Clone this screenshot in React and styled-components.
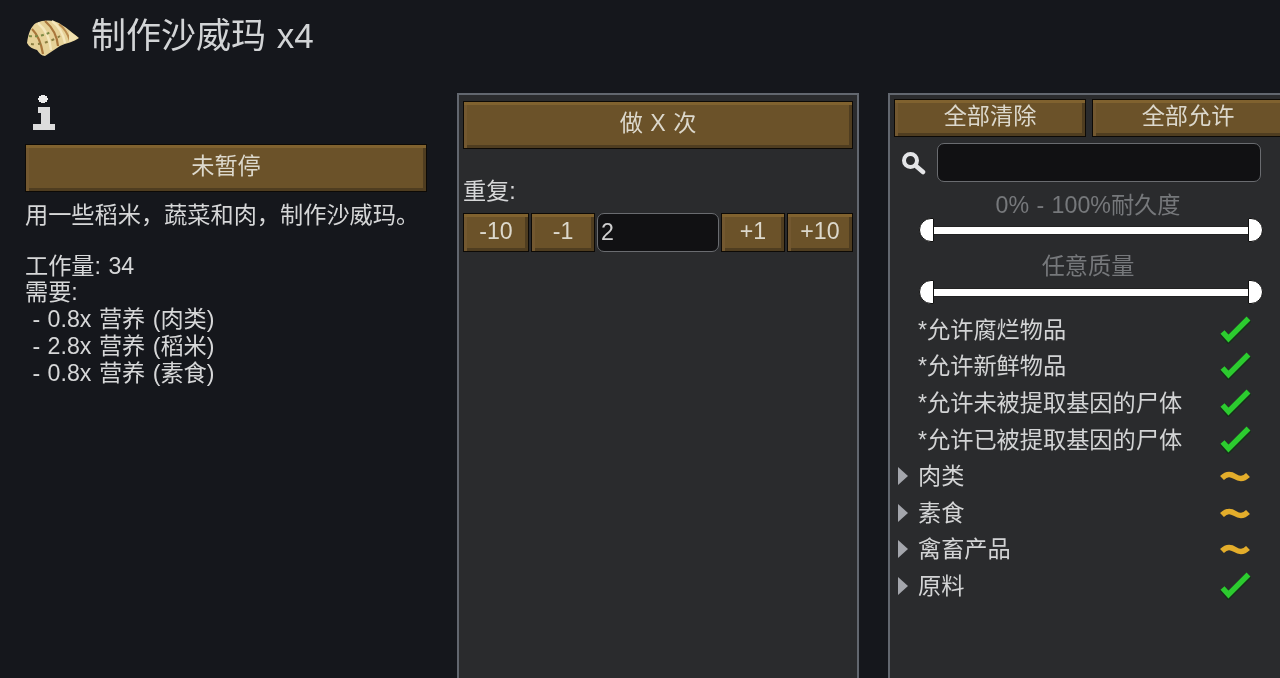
import React from 'react'
import styled, { createGlobalStyle } from 'styled-components'

const FONT = `"Liberation Sans", "Noto Sans CJK SC", sans-serif`

const Global = createGlobalStyle`
  html, body { margin: 0; padding: 0; background: #15171c; }
`

const Page = styled.div`
  width: 1280px;
  height: 678px;
  overflow: hidden;
  background: #15171c;
  color: #d6d7d8;
  font-family: ${FONT};
  font-size: 23.2px;
  word-spacing: 1px;
  display: flex;
  flex-direction: column;
  filter: blur(0.4px);
`
const Header = styled.header`
  height: 93px;
  flex: none;
  box-sizing: border-box;
  padding: 13px 0 0 26px;
  display: flex;
  align-items: flex-start;
  gap: 11px;
`
const Title = styled.h1`
  margin: 0;
  font-size: 35px;
  font-weight: 400;
  line-height: 46px;
  color: #d2d4d6;
  white-space: nowrap;
`
const Columns = styled.div`
  display: flex;
  align-items: flex-start;
  padding-left: 25px;
`
const Left = styled.section`
  width: 402px;
  flex: none;
  margin-right: 30px;
`
const InfoWrap = styled.div`
  height: 51px;
  padding-left: 8px;
`
const Description = styled.p`
  margin: ${p => p.$top}px 0 0;
  line-height: 26.7px;
  white-space: pre;
`
const Panel = styled.section`
  flex: none;
  width: 402px;
  height: 620px;
  margin-right: ${p => p.$gap || 0}px;
  box-sizing: border-box;
  background: #2a2b2d;
  border: 2px solid #62676f;
  padding: ${p => p.$top}px 4px 4px;
`
const Button = styled.button`
  display: block;
  width: ${p => (p.$width ? `${p.$width}px` : '100%')};
  height: ${p => p.$height}px;
  flex: none;
  box-sizing: border-box;
  margin: 0;
  padding: 0 0 2px;
  border: 1.5px solid #0d0a06;
  background: #6b5229;
  box-shadow: inset 0 3px 0 #80622f, inset 3px 0 0 #735830, inset 0 -3px 0 #4f3d20, inset -3px 0 0 #4f3d20;
  color: #dcd8cc;
  font-family: ${FONT};
  font-size: 23.2px;
  word-spacing: 1px;
  line-height: 1;
  white-space: nowrap;
  overflow: hidden;
`
const RepeatLabel = styled.div`
  margin-top: 29px;
  height: 35px;
  line-height: 27px;
`
const Stepper = styled.div`
  display: flex;
  gap: 2px;
`
const TextBox = styled.div`
  box-sizing: border-box;
  width: ${p => p.$width}px;
  height: ${p => p.$height}px;
  flex: none;
  background: #111113;
  border: 1.5px solid #6a6c70;
  border-radius: 7px;
  padding-left: 3px;
  line-height: 37px;
  color: #cfcfcf;
`
const ButtonRow = styled.div`
  display: flex;
  gap: 6px;
`
const SearchRow = styled.div`
  display: flex;
  align-items: center;
  margin-top: 6px;
  padding-left: 7px;
  gap: 11px;
`
const DimLabel = styled.div`
  text-align: center;
  color: #76787b;
  line-height: 26px;
  height: 26px;
  width: 388px;
  margin-top: ${p => p.$top}px;
`
const SliderTrack = styled.div`
  display: flex;
  align-items: center;
  height: 24px;
  width: 344px;
  margin: ${p => p.$top}px 0 0 24.5px;
`
const Bar = styled.div`
  flex: 1;
  height: 7px;
  background: #fff;
  box-shadow: 0 0 0 1px #222;
`
const Handle = styled.div`
  width: 15px;
  height: 24px;
  flex: none;
  box-sizing: border-box;
  background: #fff;
  border: 1px solid #111;
  position: relative;
  z-index: 1;
  border-radius: ${p => (p.$right ? '0 12px 12px 0' : '12px 0 0 12px')};
`
const List = styled.div`
  margin-top: 5.5px;
`
const Row = styled.div`
  display: flex;
  align-items: center;
  height: 36.6px;
  width: 333px;
  padding-left: 24px;
  position: relative;
  color: #d3d4d5;
`
const RowLabel = styled.span`
  flex: 1;
  white-space: nowrap;
`
const Arrow = styled.span`
  position: absolute;
  left: 4px;
  top: 50%;
  margin-top: -7px;
  width: 0;
  height: 0;
  border-left: 10px solid #a4a6ac;
  border-top: 9px solid transparent;
  border-bottom: 9px solid transparent;
`

const Sandwich = () => (
  <svg width="54" height="40" viewBox="0 0 54 40" style={{ flex: 'none', marginTop: 5 }}>
    <path d="M1 25 C2 16 5 8 10 5 C16 2 23 2 28 3 C34 5 39 9 43 12 C46 15 50 17 53 20 C48 24 40 25 34 28 C29 31 24 35 19 38 C16 38 13 35 11 32 C7 31 3 29 1 25Z" fill="#e6d298" />
    <path d="M6 11 C11 16 15 24 17 36" stroke="#a9773c" strokeWidth="2.2" fill="none" />
    <path d="M12 5 C19 11 24 20 25 32" stroke="#f4e7bd" strokeWidth="2.4" fill="none" />
    <path d="M19 3 C26 9 31 17 32 28" stroke="#a9773c" strokeWidth="2.2" fill="none" />
    <path d="M26 3 C33 8 37 15 39 25" stroke="#f4e7bd" strokeWidth="2.4" fill="none" />
    <path d="M33 6 C38 10 42 16 44 23" stroke="#b98b4e" strokeWidth="2" fill="none" />
    <path d="M3 18 C10 19 18 18 26 13" stroke="#7c8a45" strokeWidth="2" fill="none" strokeDasharray="3 3" />
    <path d="M5 26 C13 27 24 24 34 18" stroke="#8b7f42" strokeWidth="2" fill="none" strokeDasharray="3 4" />
    <path d="M43 13 C46 15 50 18 52 20 C49 22 46 23 43 24Z" fill="#f0e1b0" />
  </svg>
)

const InfoIcon = () => (
  <svg width="22" height="38" viewBox="0 0 22 38" shapeRendering="crispEdges">
    <path d="M8 2h4v1h2v2h1v2h-1v2h-2v1h-4v-1h-2v-2h-1v-2h1v-2h2z" fill="#ececec" />
    <path d="M5 14h12v17h5v6h-22v-6h8v-11h-3z" fill="#dcdcdc" />
  </svg>
)

const SearchIcon = () => (
  <svg width="25" height="24" viewBox="0 0 25 24" style={{ flex: 'none' }}>
    <circle cx="9.5" cy="9.5" r="6.5" fill="none" stroke="#e4e5e7" strokeWidth="4" />
    <path d="M15 15l7 6" stroke="#e4e5e7" strokeWidth="4.5" strokeLinecap="round" />
  </svg>
)

const Check = () => (
  <svg width="31" height="32" viewBox="0 0 31 32" style={{ flex: 'none' }}>
    <path d="M2.5 20.5L8.5 27.5L29 7" fill="none" stroke="#153018" strokeWidth="7" />
    <path d="M2.5 20L8.5 26.5L28.5 6.5" fill="none" stroke="#2ccb2f" strokeWidth="5.5" />
  </svg>
)

const Partial = () => (
  <svg width="31" height="32" viewBox="0 0 31 32" style={{ flex: 'none' }}>
    <path d="M2 20 C7 15 11 16 15 18.5 C19 21 23 22 28 17" fill="none" stroke="#e3ad2b" strokeWidth="5.5" />
  </svg>
)

const Slider = ({ top }) => (
  <SliderTrack $top={top}>
    <Handle />
    <Bar />
    <Handle $right />
  </SliderTrack>
)

const filters = [
  { label: '*允许腐烂物品', state: 'on' },
  { label: '*允许新鲜物品', state: 'on' },
  { label: '*允许未被提取基因的尸体', state: 'on' },
  { label: '*允许已被提取基因的尸体', state: 'on' },
  { label: '肉类', state: 'partial', tree: true },
  { label: '素食', state: 'partial', tree: true },
  { label: '禽畜产品', state: 'partial', tree: true },
  { label: '原料', state: 'on', tree: true },
]

const details = `工作量: 34
需要:
 - 0.8x 营养 (肉类)
 - 2.8x 营养 (稻米)
 - 0.8x 营养 (素食)`

export default function App() {
  return (
    <Page>
      <Global />
      <Header>
        <Sandwich />
        <Title>制作沙威玛 x4</Title>
      </Header>
      <Columns>
        <Left>
          <InfoWrap>
            <InfoIcon />
          </InfoWrap>
          <Button $height={48}>未暂停</Button>
          <Description $top={10}>用一些稻米，蔬菜和肉，制作沙威玛。</Description>
          <Description $top={24}>{details}</Description>
        </Left>
        <Panel $gap={29} $top={6}>
          <Button $height={48}>做 X 次</Button>
          <RepeatLabel>重复:</RepeatLabel>
          <Stepper>
            <Button $width={66} $height={39}>-10</Button>
            <Button $width={64} $height={39}>-1</Button>
            <TextBox $width={122} $height={39}>2</TextBox>
            <Button $width={64} $height={39}>+1</Button>
            <Button $width={66} $height={39}>+10</Button>
          </Stepper>
        </Panel>
        <Panel $top={4}>
          <ButtonRow>
            <Button $width={192} $height={38}>全部清除</Button>
            <Button $width={192} $height={38}>全部允许</Button>
          </ButtonRow>
          <SearchRow>
            <SearchIcon />
            <TextBox $width={324} $height={39} />
          </SearchRow>
          <DimLabel $top={10}>0% - 100%耐久度</DimLabel>
          <Slider top={0} />
          <DimLabel $top={11}>任意质量</DimLabel>
          <Slider top={1} />
          <List>
            {filters.map(f => (
              <Row key={f.label}>
                {f.tree && <Arrow />}
                <RowLabel>{f.label}</RowLabel>
                {f.state === 'on' ? <Check /> : <Partial />}
              </Row>
            ))}
          </List>
        </Panel>
      </Columns>
    </Page>
  )
}
